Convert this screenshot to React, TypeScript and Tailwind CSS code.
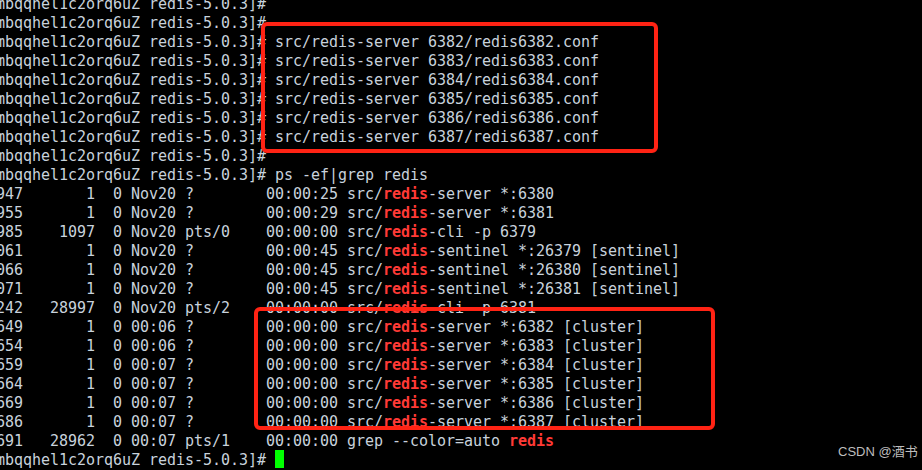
const PROMPT = "mbqqhel1c2orq6uZ redis-5.0.3]#"

type Line = { pre?: string; hl?: string; post?: string; text?: string; cursor?: boolean }

const procLine = (head: string, time: string, cmd: string, rest: string): Line => ({
  pre: `${head}${time} src/`,
  hl: "redis",
  post: `-${cmd}${rest}`,
})

const lines: Line[] = [
  { text: PROMPT },
  { text: PROMPT },
  ...["6382", "6383", "6384", "6385", "6386", "6387"].map((p) => ({
    text: `${PROMPT} src/redis-server ${p}/redis${p}.conf`,
  })),
  { text: PROMPT },
  { text: `${PROMPT} ps -ef|grep redis` },
  procLine("947       1  0 Nov20 ?        ", "00:00:25", "server", " *:6380"),
  procLine("955       1  0 Nov20 ?        ", "00:00:29", "server", " *:6381"),
  procLine("985    1097  0 Nov20 pts/0    ", "00:00:00", "cli", " -p 6379"),
  procLine("061       1  0 Nov20 ?        ", "00:00:45", "sentinel", " *:26379 [sentinel]"),
  procLine("066       1  0 Nov20 ?        ", "00:00:45", "sentinel", " *:26380 [sentinel]"),
  procLine("071       1  0 Nov20 ?        ", "00:00:45", "sentinel", " *:26381 [sentinel]"),
  procLine("242   28997  0 Nov20 pts/2    ", "00:00:00", "cli", " -p 6381"),
  procLine("649       1  0 00:06 ?        ", "00:00:00", "server", " *:6382 [cluster]"),
  procLine("654       1  0 00:06 ?        ", "00:00:00", "server", " *:6383 [cluster]"),
  procLine("659       1  0 00:07 ?        ", "00:00:00", "server", " *:6384 [cluster]"),
  procLine("664       1  0 00:07 ?        ", "00:00:00", "server", " *:6385 [cluster]"),
  procLine("669       1  0 00:07 ?        ", "00:00:00", "server", " *:6386 [cluster]"),
  procLine("686       1  0 00:07 ?        ", "00:00:00", "server", " *:6387 [cluster]"),
  { pre: "691   28962  0 00:07 pts/1    00:00:00 grep --color=auto ", hl: "redis" },
  { text: `${PROMPT} `, cursor: true },
]

export default function App() {
  return (
    <div className="relative w-[922px] h-[470px] overflow-hidden bg-black">
      {/* terminal buffer */}
      <div
        className="-mt-[5px] -ml-[4px] whitespace-pre text-[15px] leading-[19px] tracking-[-0.03px] text-[#c8d2dc]"
        style={{ fontFamily: '"DejaVu Sans Mono", "Liberation Mono", monospace' }}
      >
        {lines.map((l, i) => (
          <div key={i} className="h-[19px]">
            {l.text ?? l.pre}
            {l.hl && <span className="font-bold text-[#ff3a36]">{l.hl}</span>}
            {l.post}
            {l.cursor && <span className="inline-block align-top -mt-[1px] w-[9px] h-[18px] bg-[#00ff00]" />}
          </div>
        ))}
      </div>

      {/* annotation boxes */}
      <div className="absolute left-[261px] top-[22px] w-[397px] h-[131px] rounded-[6px] border-4 border-[#ff2314]" />
      <div className="absolute left-[254px] top-[307px] w-[461px] h-[123px] rounded-[6px] border-4 border-[#ff2314]" />

      {/* watermark */}
      <div
        className="absolute left-[838px] top-[443px] text-[13px] leading-[17px] text-[#bdbdbd]"
        style={{ fontFamily: '"Liberation Sans", "Noto Sans CJK SC", sans-serif' }}
      >
        CSDN @酒书
      </div>
    </div>
  )
}
